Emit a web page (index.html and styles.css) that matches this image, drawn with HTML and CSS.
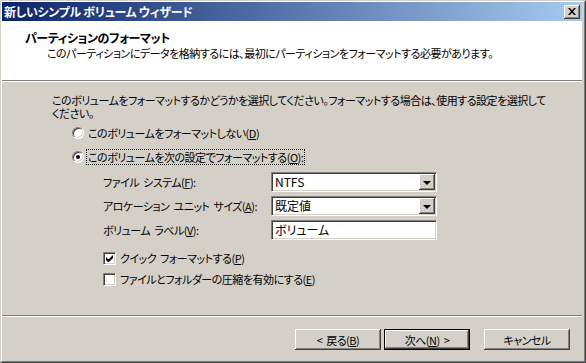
FILE: index.html
```html
<!DOCTYPE html>
<html lang="ja">
<head>
    <meta charset="UTF-8">
    <title>新しいシンプル ボリューム ウィザード</title>
    <link rel="stylesheet" href="styles.css">
</head>
<body>
    <div class="window">
        <div class="frame">
            <div class="titlebar">
                <span class="titlebar-text">新しいシンプル ボリューム ウィザード</span>
                <span class="close-btn">
                    <svg width="8" height="7" viewBox="0 0 8 7">
                        <path d="M0 0h2l2 2.5 2-2.5h2l-3 3.5 3 3.5h-2l-2-2.5-2 2.5h-2l3-3.5z" fill="#000"/>
                    </svg>
                </span>
            </div>

            <div class="header">
                <div class="header-title">パーティションのフォーマット</div>
                <div class="header-sub">このパーティションにデータを格納するには、最初にパーティションをフォーマットする必要があります。</div>
            </div>

            <div class="content">
                <p class="intro">このボリュームをフォーマットするかどうかを選択してください。フォーマットする場合は、使用する設定を選択して<br>ください。</p>

                <div class="option-row first">
                    <span class="radio"></span>
                    <span class="option-text">このボリュームをフォーマットしない(<u>D</u>)</span>
                </div>
                <div class="option-row">
                    <span class="radio checked"></span>
                    <span class="option-text focused">このボリュームを次の設定でフォーマットする(<u>O</u>):</span>
                </div>

                <div class="settings">
                    <span class="field-label">ファイル システム(<u>F</u>):</span>
                    <div class="combo">
                        <span class="combo-value">NTFS</span>
                        <span class="combo-btn"><span class="arrow"></span></span>
                    </div>

                    <span class="field-label">アロケーション ユニット サイズ(<u>A</u>):</span>
                    <div class="combo">
                        <span class="combo-value">既定値</span>
                        <span class="combo-btn"><span class="arrow"></span></span>
                    </div>

                    <span class="field-label">ボリューム ラベル(<u>V</u>):</span>
                    <div class="combo">
                        <span class="combo-value">ボリューム</span>
                    </div>
                </div>

                <div class="check-row first">
                    <span class="checkbox">
                        <svg width="7" height="7" viewBox="0 0 7 7">
                            <path d="M0 2v3l2 2h1l4-4v-3l-4 4h-1z" fill="#000"/>
                        </svg>
                    </span>
                    <span>クイック フォーマットする(<u>P</u>)</span>
                </div>
                <div class="check-row">
                    <span class="checkbox"></span>
                    <span>ファイルとフォルダーの圧縮を有効にする(<u>E</u>)</span>
                </div>
            </div>

            <div class="footer">
                <span class="btn">&lt; 戻る(<u>B</u>)</span>
                <span class="btn btn-default">次へ(<u>N</u>) &gt;</span>
                <span class="btn btn-cancel">キャンセル</span>
            </div>
        </div>
    </div>
</body>
</html>
```

FILE: styles.css
```css
* {
    margin: 0;
    padding: 0;
    box-sizing: border-box;
}

body {
    font-family: "Noto Sans CJK JP", "Noto Sans", sans-serif;
    font-size: 11px;
    line-height: 12px;
    letter-spacing: -0.5px;
    word-spacing: 2px;
    font-feature-settings: "palt";
    color: #000;
    background: #d4d0c8;
}

u {
    text-decoration: underline;
    text-underline-offset: 1px;
}

.window {
    width: 586px;
    height: 363px;
    border: 1px solid;
    border-color: #d4d0c8 #404040 #404040 #d4d0c8;
}

.frame {
    height: 100%;
    border: 1px solid;
    border-color: #fff #808080 #808080 #fff;
    padding: 0 2px 2px 0;
    background: #d4d0c8;
    display: flex;
    flex-direction: column;
}

/* title bar */
.titlebar {
    height: 19px;
    display: flex;
    align-items: center;
    justify-content: space-between;
    padding: 0 2px;
    background: linear-gradient(90deg, #0a246a 0%, #a6caf0 100%);
}

.titlebar-text {
    color: #fff;
    font-size: 12px;
    font-weight: bold;
    letter-spacing: -0.3px;
    word-spacing: 0;
}

.close-btn {
    width: 16px;
    height: 14px;
    display: flex;
    align-items: center;
    justify-content: center;
    background: #d4d0c8;
    box-shadow: inset -1px -1px #404040, inset 1px 1px #fff, inset -2px -2px #808080;
}

/* white header */
.header {
    height: 61px;
    background: #fff;
    padding: 10px 0 0 23px;
    border-bottom: 1px solid #fff;
    box-shadow: inset 0 -1px #808080;
}

.header-title {
    font-size: 12px;
    font-weight: bold;
    line-height: 14px;
    letter-spacing: -0.4px;
}

.header-sub {
    line-height: 15px;
    margin: 1px 0 0 22px;
}

/* main area */
.content {
    flex: 1;
    padding: 12px 0 0 50px;
}

.intro {
    line-height: 13px;
    white-space: nowrap;
}

.option-row {
    display: flex;
    align-items: center;
    gap: 2px;
    height: 14px;
    margin: 10px 0 0 20px;
}

.option-row.first {
    margin-top: 6px;
}

.radio {
    width: 12px;
    height: 12px;
    border-radius: 50%;
    border: 1px solid;
    border-color: #808080 #fff #fff #808080;
    background: #fff;
    box-shadow: inset 1px 1px #404040, inset -1px -1px #d4d0c8;
    display: flex;
    align-items: center;
    justify-content: center;
}

.radio.checked::after {
    content: "";
    width: 4px;
    height: 4px;
    border-radius: 50%;
    background: #000;
}

.option-text {
    padding: 1px;
    border: 1px solid transparent;
}

.option-text.focused {
    border: 1px dotted #000;
}

.settings {
    display: grid;
    grid-template-columns: 168px 166px;
    row-gap: 4px;
    margin: 8px 0 0 51px;
    align-items: center;
}

.combo {
    height: 20px;
    background: #fff;
    border: 1px solid;
    border-color: #808080 #fff #fff #808080;
    box-shadow: inset 1px 1px #404040, inset -1px -1px #d4d0c8;
    display: flex;
    align-items: center;
    justify-content: space-between;
    padding: 1px 1px 1px 2px;
}

.combo-value {
    padding-left: 1px;
    font-size: 12px;
    line-height: 16px;
    letter-spacing: 0;
}

.combo-btn {
    width: 16px;
    height: 16px;
    background: #d4d0c8;
    box-shadow: inset -1px -1px #404040, inset 1px 1px #fff, inset -2px -2px #808080;
    display: flex;
    align-items: center;
    justify-content: center;
}

.arrow {
    width: 0;
    height: 0;
    border-left: 4px solid transparent;
    border-right: 4px solid transparent;
    border-top: 4px solid #000;
    margin: 1px 1px 0 0;
}

.check-row {
    display: flex;
    align-items: center;
    gap: 4px;
    height: 14px;
    margin: 7px 0 0 51px;
}

.check-row.first {
    margin-top: 11px;
}

.checkbox {
    width: 13px;
    height: 13px;
    background: #fff;
    border: 1px solid;
    border-color: #808080 #fff #fff #808080;
    box-shadow: inset 1px 1px #404040, inset -1px -1px #d4d0c8;
    display: flex;
    align-items: center;
    justify-content: center;
}

/* buttons */
.footer {
    height: 44px;
    border-top: 1px solid #808080;
    box-shadow: inset 0 1px #fff;
    display: flex;
    justify-content: flex-end;
    gap: 3px;
    padding: 13px 12px 0 0;
}

.btn {
    width: 86px;
    height: 21px;
    display: flex;
    align-items: center;
    justify-content: center;
    background: #d4d0c8;
    box-shadow: inset -1px -1px #404040, inset 1px 1px #fff, inset -2px -2px #808080;
}

.btn-default {
    border: 1px solid #000;
}

.btn-cancel {
    margin-left: 11px;
}
```
